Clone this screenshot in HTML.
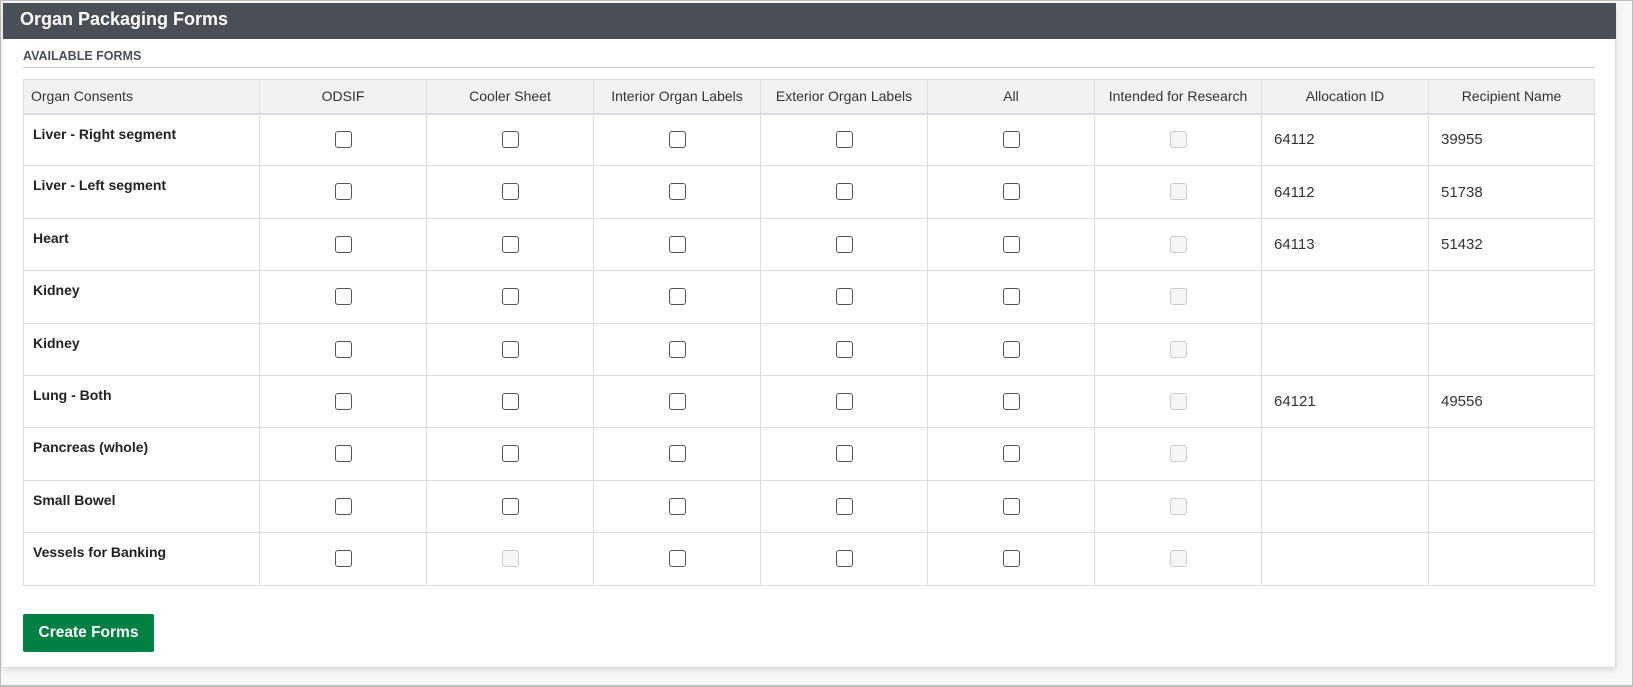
<!DOCTYPE html>
<html><head><style>
*{box-sizing:border-box;margin:0;padding:0}
body{width:1633px;height:687px;background:#f7f7f7;border:1px solid #bdbdbd;border-bottom:2px solid #bdbdbd;position:relative;overflow:hidden;font-family:"Liberation Sans","DejaVu Sans",sans-serif;color:#222}
.panel{position:absolute;left:2px;top:2px;width:1613px;height:664px;background:#fff;border-right:1px solid #ddd;box-shadow:0 3px 6px rgba(0,0,0,.12)}
.hdr{position:absolute;left:0;top:0;width:1613px;height:36px;background:#4a4f57;color:#fff;font-size:18px;font-weight:bold;padding:6px 0 0 17px}
.sub{position:absolute;left:20px;top:46px;font-size:12.5px;font-weight:bold;color:#4a4f57}
.hr{position:absolute;left:20px;top:64px;width:1572px;height:1px;background:#c8ccd0}
table{position:absolute;left:20px;top:76px;border-collapse:collapse;table-layout:fixed;width:1571px}
th,td{border:1px solid #dcdde2}
th{height:34px;background:#f2f2f2;font-weight:normal;font-size:14px;color:#333;text-align:center;border-bottom:2px solid #dcdde2}
th:first-child{text-align:left;padding-left:7px}
td{height:52.4px;text-align:center;vertical-align:middle}
td.n{text-align:left;vertical-align:top;font-weight:bold;font-size:14px;padding:11px 0 0 9px}
td.v{text-align:left;font-size:15px;padding-left:12px;color:#333}
.c{display:inline-block;width:17px;height:17px;border:1px solid #555;border-radius:3px;background:#fff;vertical-align:middle}
.d{border-color:#ccc;background:#f5f5f5}
.btn{position:absolute;left:20px;top:611px;width:131px;height:38px;background:#008043;border-radius:2px;color:#fff;font-size:15.5px;font-weight:bold;text-align:center;line-height:38px}
</style></head><body>
<div class="panel">
<div class="hdr">Organ Packaging Forms</div>
<div class="sub">AVAILABLE FORMS</div>
<div class="hr"></div>
<table>
<colgroup><col style="width:236px"><col style="width:167px"><col style="width:167px"><col style="width:167px"><col style="width:167px"><col style="width:167px"><col style="width:167px"><col style="width:167px"><col style="width:166px"></colgroup>
<tr><th>Organ Consents</th><th>ODSIF</th><th>Cooler Sheet</th><th>Interior Organ Labels</th><th>Exterior Organ Labels</th><th>All</th><th>Intended for Research</th><th>Allocation ID</th><th>Recipient Name</th></tr>
<tr><td class="n">Liver - Right segment</td><td><span class="c"></span></td><td><span class="c"></span></td><td><span class="c"></span></td><td><span class="c"></span></td><td><span class="c"></span></td><td><span class="c d"></span></td><td class="v">64112</td><td class="v">39955</td></tr>
<tr><td class="n">Liver - Left segment</td><td><span class="c"></span></td><td><span class="c"></span></td><td><span class="c"></span></td><td><span class="c"></span></td><td><span class="c"></span></td><td><span class="c d"></span></td><td class="v">64112</td><td class="v">51738</td></tr>
<tr><td class="n">Heart</td><td><span class="c"></span></td><td><span class="c"></span></td><td><span class="c"></span></td><td><span class="c"></span></td><td><span class="c"></span></td><td><span class="c d"></span></td><td class="v">64113</td><td class="v">51432</td></tr>
<tr><td class="n">Kidney</td><td><span class="c"></span></td><td><span class="c"></span></td><td><span class="c"></span></td><td><span class="c"></span></td><td><span class="c"></span></td><td><span class="c d"></span></td><td class="v"></td><td class="v"></td></tr>
<tr><td class="n">Kidney</td><td><span class="c"></span></td><td><span class="c"></span></td><td><span class="c"></span></td><td><span class="c"></span></td><td><span class="c"></span></td><td><span class="c d"></span></td><td class="v"></td><td class="v"></td></tr>
<tr><td class="n">Lung - Both</td><td><span class="c"></span></td><td><span class="c"></span></td><td><span class="c"></span></td><td><span class="c"></span></td><td><span class="c"></span></td><td><span class="c d"></span></td><td class="v">64121</td><td class="v">49556</td></tr>
<tr><td class="n">Pancreas (whole)</td><td><span class="c"></span></td><td><span class="c"></span></td><td><span class="c"></span></td><td><span class="c"></span></td><td><span class="c"></span></td><td><span class="c d"></span></td><td class="v"></td><td class="v"></td></tr>
<tr><td class="n">Small Bowel</td><td><span class="c"></span></td><td><span class="c"></span></td><td><span class="c"></span></td><td><span class="c"></span></td><td><span class="c"></span></td><td><span class="c d"></span></td><td class="v"></td><td class="v"></td></tr>
<tr><td class="n">Vessels for Banking</td><td><span class="c"></span></td><td><span class="c d"></span></td><td><span class="c"></span></td><td><span class="c"></span></td><td><span class="c"></span></td><td><span class="c d"></span></td><td class="v"></td><td class="v"></td></tr>
</table>
<div class="btn">Create Forms</div>
</div>
</body></html>
